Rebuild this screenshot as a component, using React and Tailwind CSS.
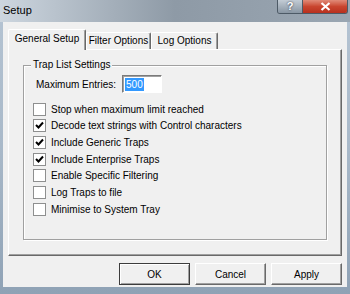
import { useState } from "react";

const options = [
  { label: "Stop when maximum limit reached", checked: false },
  { label: "Decode text strings with Control characters", checked: true },
  { label: "Include Generic Traps", checked: true },
  { label: "Include Enterprise Traps", checked: true },
  { label: "Enable Specific Filtering", checked: false },
  { label: "Log Traps to file", checked: false },
  { label: "Minimise to System Tray", checked: false },
];

const CheckBox = ({ checked, onChange }) => (
  <button
    onClick={onChange}
    className="flex h-[13px] w-[13px] shrink-0 items-center justify-center border border-[#8e8f8f] bg-white"
  >
    {checked && (
      <svg width="9" height="9" viewBox="0 0 9 9">
        <path d="M1 4 L3.5 6.5 L8 1.5" stroke="#000" strokeWidth="2" fill="none" />
      </svg>
    )}
  </button>
);

const DialogButton = ({ children, isDefault }) => (
  <button
    className={`h-[22px] w-[71px] bg-[#f0f0f0] text-[10px] text-black ${
      isDefault
        ? "border border-[#3c3c3c] shadow-[inset_1px_1px_0_#fff,inset_-1px_-1px_0_#a0a0a0]"
        : "border border-t-white border-l-white border-r-[#696969] border-b-[#696969] shadow-[inset_-1px_-1px_0_#a0a0a0]"
    }`}
  >
    {children}
  </button>
);

const App = () => {
  const [tab, setTab] = useState(0);
  const [checks, setChecks] = useState(options.map((o) => o.checked));
  const tabs = [
    { name: "General Setup", width: "w-[78px]" },
    { name: "Filter Options", width: "w-[65px]" },
    { name: "Log Options", width: "w-[67px]" },
  ];

  return (
    <div
      className="flex h-[294px] w-[350px] flex-col overflow-hidden bg-gradient-to-b from-[#b5c4d3] via-[#a9b9c9] to-[#8fa2b5] text-black"
      style={{ fontFamily: '"Liberation Sans", Arial, sans-serif' }}
    >
      {/* title bar */}
      <div className="flex h-[22px] shrink-0 items-start bg-gradient-to-r from-[#cdd6df] via-[#8e9aa6] to-[#9aa6b2]">
        <span className="pl-[3px] pt-[3px] text-[11px] leading-[15px]">Setup</span>
        <div className="ml-auto mr-[2px] flex h-[14px] overflow-hidden rounded-b-[3px] border border-t-0 border-[#4d5a66]">
          <div className="flex w-[25px] items-center justify-center border-r border-[#4d5a66] bg-gradient-to-b from-[#c3ccd5] to-[#8996a3] text-[11px] font-bold leading-none text-white [text-shadow:0_0_2px_#223]">
            ?
          </div>
          <div className="flex w-[44px] items-center justify-center bg-gradient-to-b from-[#e08a78] via-[#c9452f] to-[#b8301e]">
            <svg width="11" height="9" viewBox="0 0 11 9">
              <path d="M1.5 1 L9.5 8 M9.5 1 L1.5 8" stroke="#fff" strokeWidth="2.2" />
            </svg>
          </div>
        </div>
      </div>

      {/* client area */}
      <div className="mx-[3px] flex h-[265px] shrink-0 flex-col bg-[#f0f0f0] px-[5px] pt-[7px] text-[10px]">
        <div className="flex h-[20px] items-start">
          {tabs.map((t, i) =>
            i === tab ? (
              <button
                key={t.name}
                onClick={() => setTab(i)}
                className={`relative z-10 h-[21px] ${t.width} whitespace-nowrap rounded-t-[2px] border border-b-0 border-t-white border-l-white border-r-[#696969] bg-[#f0f0f0] pb-[3px] text-[10px] leading-[14px] shadow-[inset_-1px_0_0_#a0a0a0]`}
              >
                {t.name}
              </button>
            ) : (
              <button
                key={t.name}
                onClick={() => setTab(i)}
                className={`mt-[3px] h-[17px] ${t.width} whitespace-nowrap rounded-t-[2px] border border-b-0 border-t-white border-l-white border-r-[#696969] bg-[#f0f0f0] text-[10px] leading-[14px] shadow-[inset_-1px_0_0_#a0a0a0]`}
              >
                {t.name}
              </button>
            ),
          )}
        </div>

        <div className="h-[207px] border border-t-white border-l-white border-r-[#696969] border-b-[#696969] px-[14px] pt-[15px] shadow-[inset_-1px_-1px_0_#a0a0a0]">
          <div className="relative h-[175px] border border-[#a0a0a0] pl-[9px] shadow-[inset_1px_1px_0_#fff,1px_1px_0_#fff]">
            <span className="absolute -top-[7px] left-[7px] bg-[#f0f0f0] px-[2px] leading-[12px]">
              Trap List Settings
            </span>
            <div className="mt-[9px] flex h-[18px] items-center gap-[6px] pl-[3px]">
              <span>Maximum Entries:</span>
              <div className="flex h-[18px] w-[40px] items-center border border-t-[#7a7a7a] border-l-[#7a7a7a] border-r-white border-b-white bg-white px-[2px] shadow-[inset_1px_1px_0_#a0a0a0]">
                <span className="bg-[#3399ff] px-px leading-[13px] text-white">500</span>
              </div>
            </div>
            <div className="mt-[8px] flex flex-col">
              {options.map((o, i) => (
                <label key={o.label} className="flex h-[16.67px] items-center gap-[5px]">
                  <CheckBox
                    checked={checks[i]}
                    onChange={() =>
                      setChecks((prev) => prev.map((c, j) => (j === i ? !c : c)))
                    }
                  />
                  <span>{o.label}</span>
                </label>
              ))}
            </div>
          </div>
        </div>

        <div className="mt-[7px] flex justify-end gap-[5px]">
          <DialogButton isDefault>OK</DialogButton>
          <DialogButton>Cancel</DialogButton>
          <DialogButton>Apply</DialogButton>
        </div>
      </div>
    </div>
  );
};

export default App;
